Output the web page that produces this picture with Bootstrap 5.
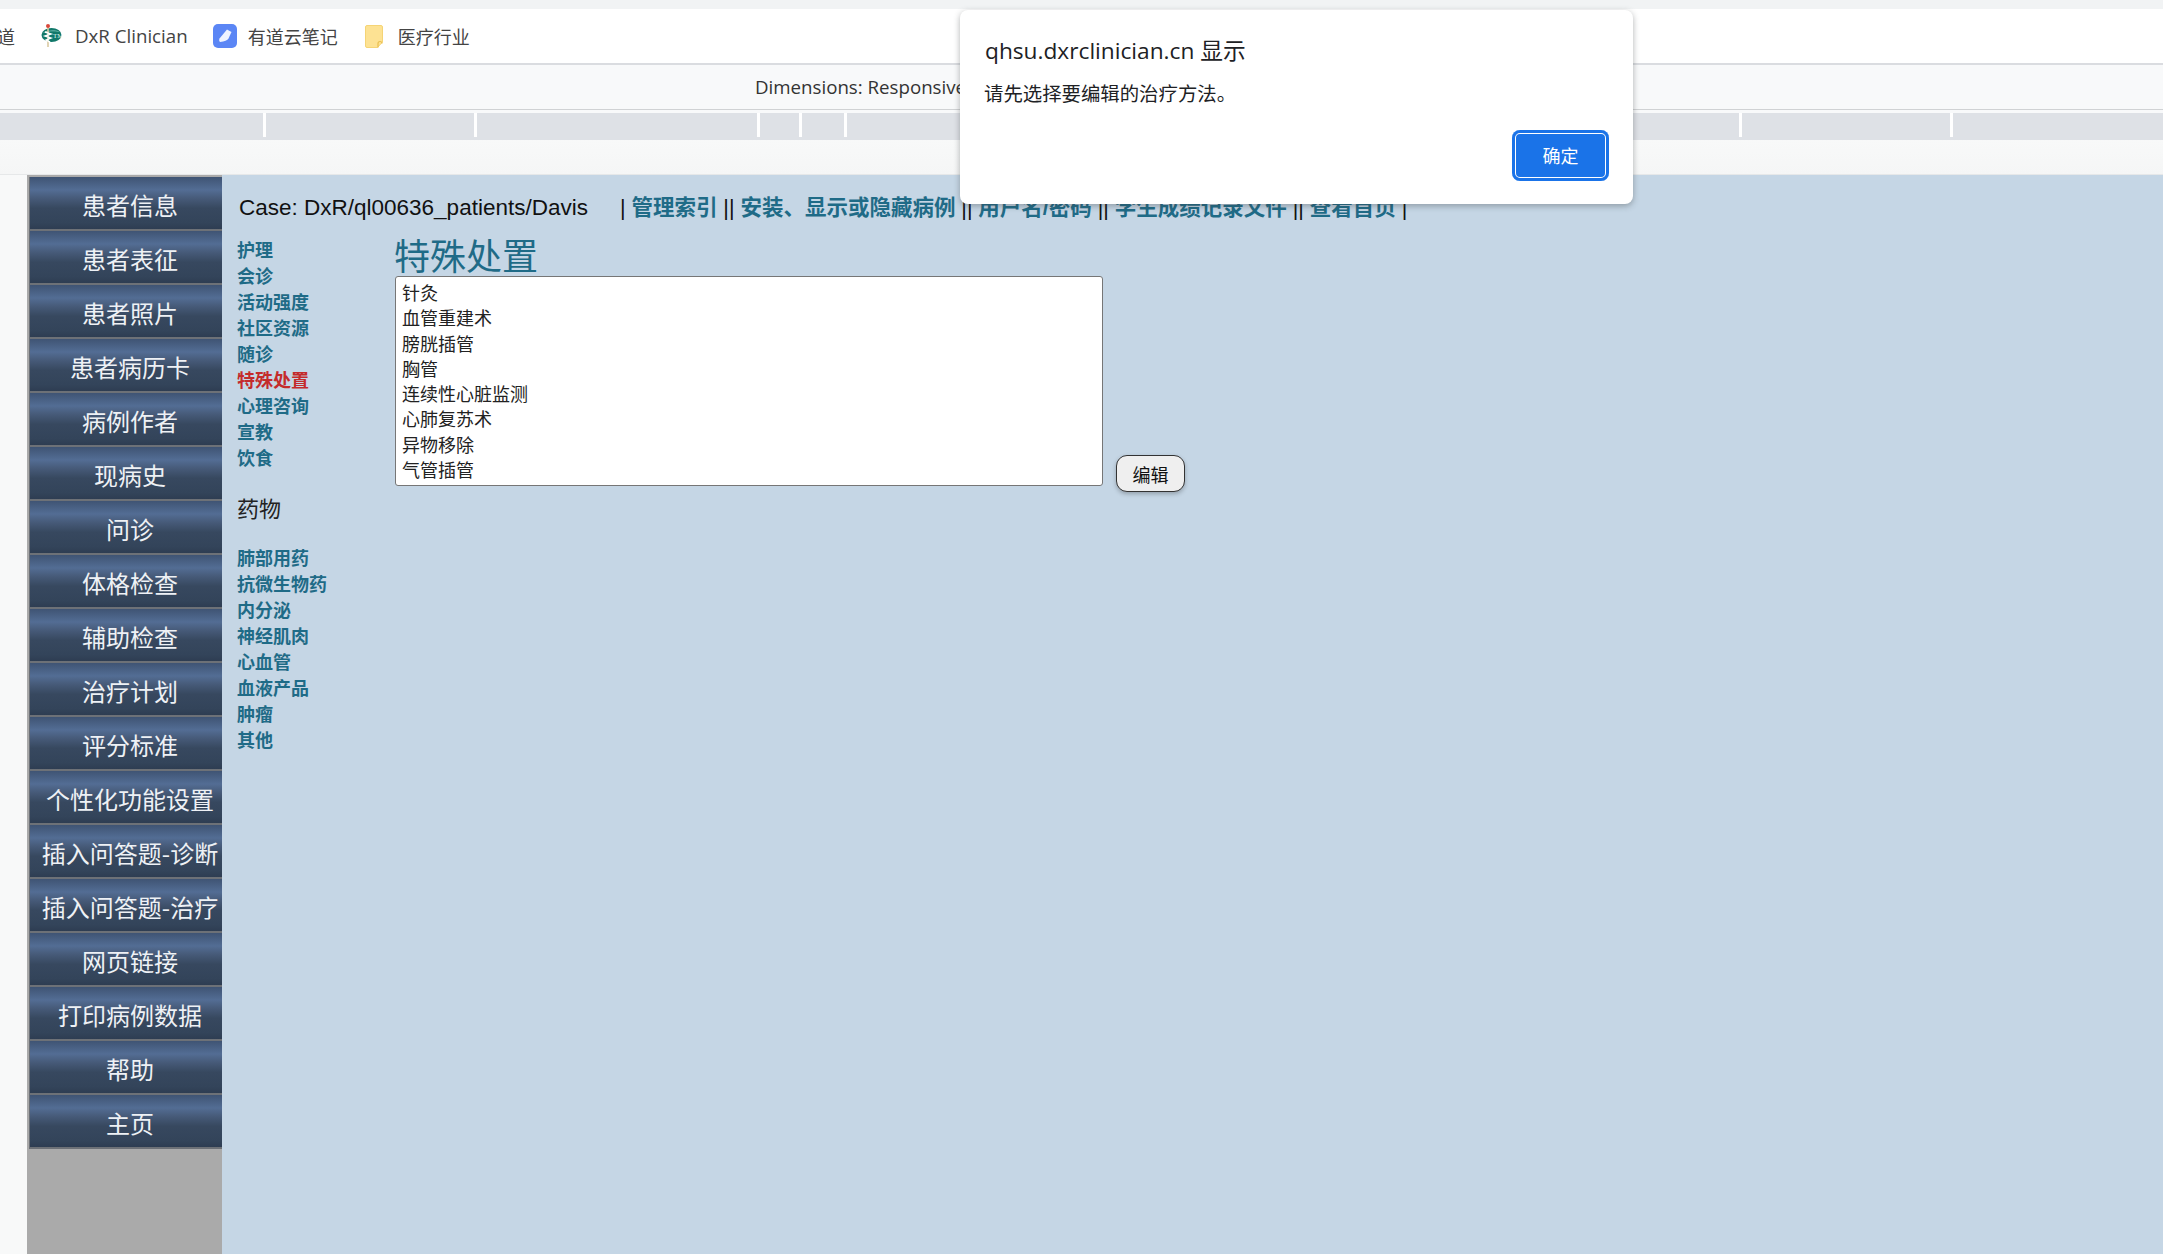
<!DOCTYPE html>
<html lang="zh">
<head>
<meta charset="utf-8">
<title>DxR Clinician</title>
<link href="https://cdn.jsdelivr.net/npm/bootstrap@5.3.0/dist/css/bootstrap.min.css" rel="stylesheet">
<style>
html,body{height:100%}
body{margin:0;overflow:hidden;background:#f8f9f9;font-family:"Noto Sans CJK SC","Noto Sans",sans-serif;color:#222;position:relative;width:2163px;height:1254px}
.tabstrip{height:9px;background:#f1f3f4}
.bookbar{height:56px;background:#fff;border-bottom:2px solid #dadce0;font-size:18px;color:#444;line-height:24px}
.bm-first{width:15px;overflow:hidden;white-space:nowrap;direction:rtl}
.bm-dxr{margin-left:26px;font-family:"Open Sans","Noto Sans CJK SC",sans-serif;font-size:18.7px;gap:13px}
.bm-you{margin-left:25px;gap:11px}
.bm-fold{margin-left:27px;gap:15px}
.devbar{height:45px;background:#f8f9fa;border-bottom:1px solid #d0d2d4;padding-left:755px;font-size:18.7px;color:#333;font-family:"Open Sans","Noto Sans CJK SC",sans-serif;white-space:nowrap}
.rulerwrap{height:30px;padding-top:3px;background:#f8f9fa}
.rulerbar{height:27px;background:#dee1e6;padding-bottom:3px}
.rulercell{height:24px;border-right:3px solid #fff;flex:none}
.ruler-a{width:266px}.ruler-b{width:211px}.ruler-c{width:283px}.ruler-d{width:42px}.ruler-e{width:45px}.ruler-f{width:895px}.ruler-g{width:211px}
.chromegap{height:35px;background:linear-gradient(#f8f9f9,#f5f6f6);border-bottom:1px solid #e6e8e9}
.pagewrap{height:1079px;background:#f8f9f9;padding-left:27px}
.sidepanel{width:195px;background:#aaa;padding:2px 0 0 2px;flex:none}
.sidelink{height:54px;display:flex;align-items:center;justify-content:center;padding:1px 0 0 8px;font-size:24px;line-height:30px;color:#eef1f5;white-space:nowrap;text-decoration:none;
 background:linear-gradient(#3f5474 0,#536d94 24%,#465a78 40%,#37485f 58%,#33445a 85%,#2e3d52 96%,#6d7177 96%,#6d7177 100%);border-left:1px solid #6d7177}
.sidelink:hover{color:#fff}
.mainpanel{background:#c5d6e5;padding:0 0 0 17px}
.topline{height:61px;padding-top:14px;font-size:21.5px;line-height:38px;white-space:nowrap;color:#111;font-family:"Liberation Sans","Noto Sans CJK SC",sans-serif}
.casetxt{font-size:22.5px;margin-right:32px}
.tlink{font-weight:700;color:#1f6b87;text-decoration:none}
.sep{margin:0 5.9px}
.leftcol{width:158px;flex:none;margin-left:-2px}
.slink{display:block;font-size:18px;line-height:26px;font-weight:700;color:#1f6b87;text-decoration:none}
.slink.cur{color:#c42b2b}
.drughead{font-size:22px;line-height:30px;margin:22px 0;color:#222}
.proctitle{font-size:36px;line-height:40px;color:#1f6b87;margin:-2px 0 0 -1px;font-weight:400;height:42px}
.procsel{width:708px;height:210px;border:1px solid #767676;border-radius:3px;background:#fff;font-size:18px;color:#222;padding:2px 0 0;overflow:hidden;font-family:"Noto Sans CJK SC",sans-serif}
.procsel option{padding:0 6px;height:25.3px;min-height:25.3px;line-height:25.3px}
.editbtn{width:69px;height:37px;margin:0 0 -6px 13px;border:1px solid #333;border-radius:11px;background:#efefef;font-size:18px;line-height:24px;padding:0;color:#111;box-shadow:0 2px 4px rgba(0,0,0,.25)}
.alertbox{position:absolute;left:960px;top:10px;width:673px;height:194px;border:0;border-radius:8px;background:#fff;box-shadow:0 2px 6px rgba(60,64,67,.4);padding:0 24px}
.alerttitle{font-size:22.7px;line-height:30px;margin:26px 0 0 1px;color:#202124;font-family:"Open Sans","Noto Sans CJK SC",sans-serif}
.alertmsg{font-size:19.4px;line-height:26px;margin-top:14px;color:#202124}
.okbtn{position:absolute;left:552px;top:120px;width:97px;height:51px;background:#1a73e8;border:0;border-radius:8px;font-size:18px;color:#fff;padding:0;box-shadow:inset 0 0 0 3px #1a73e8,inset 0 0 0 4px #fff}
</style>
</head>
<body>
<div class="tabstrip"></div>
<div class="bookbar d-flex align-items-center">
  <span class="bm-first">道</span>
  <span class="bm-dxr d-flex align-items-center">
    <svg width="21" height="24" viewBox="0 0 21 24"><ellipse cx="10.5" cy="11" rx="10" ry="7" fill="#11786a"/><path d="M2 9c3-3 13-3 17-1-4-1-12-1-17 1z" fill="#8fd0c4"/><text x="12" y="14" font-size="7" fill="#d8f0ea" font-family="Liberation Serif, serif">TM</text><path d="M7 2v21" stroke="#d9c9a0" stroke-width="1.6"/><path d="M4 8l6 2-6 2 6 2-5 2 4 2" stroke="#fff" stroke-width="1.4" fill="none"/><circle cx="7" cy="2" r="2" fill="#d9483b"/></svg>
    DxR Clinician</span>
  <span class="bm-you d-flex align-items-center">
    <svg width="24" height="24" viewBox="0 0 24 24"><rect width="24" height="24" rx="5" fill="#5b86f5"/><path d="M14 5.5l4.500 2.500-3 6.500c-1 2-4 3-8.500 3.500-1-1-1-2-.5-3.500z" fill="#eef3ff"/></svg>
    有道云笔记</span>
  <span class="bm-fold d-flex align-items-center">
    <svg width="18" height="23" viewBox="0 0 18 23"><path d="M2 .5h14a1.500 1.500 0 0 1 1.500 1.500v15l-5 5.500H2A1.500 1.500 0 0 1 .5 21V2A1.500 1.500 0 0 1 2 .5z" fill="#fde293" stroke="#f5d476"/><path d="M13 22.500v-4a2 2 0 0 1 4 0" fill="none" stroke="#e9bf4f" stroke-width="1.200"/></svg>
    医疗行业</span>
</div>
<div class="devbar d-flex align-items-center"><span>Dimensions: Responsive</span></div>
<div class="rulerwrap"><div class="rulerbar d-flex">
  <div class="rulercell ruler-a"></div><div class="rulercell ruler-b"></div><div class="rulercell ruler-c"></div><div class="rulercell ruler-d"></div><div class="rulercell ruler-e"></div><div class="rulercell ruler-f"></div><div class="rulercell ruler-g"></div>
</div></div>
<div class="chromegap"></div>
<div class="pagewrap d-flex">
  <div class="sidepanel">
    <nav class="nav flex-column">
      <a class="sidelink" href="#">患者信息</a>
      <a class="sidelink" href="#">患者表征</a>
      <a class="sidelink" href="#">患者照片</a>
      <a class="sidelink" href="#">患者病历卡</a>
      <a class="sidelink" href="#">病例作者</a>
      <a class="sidelink" href="#">现病史</a>
      <a class="sidelink" href="#">问诊</a>
      <a class="sidelink" href="#">体格检查</a>
      <a class="sidelink" href="#">辅助检查</a>
      <a class="sidelink" href="#">治疗计划</a>
      <a class="sidelink" href="#">评分标准</a>
      <a class="sidelink" href="#">个性化功能设置</a>
      <a class="sidelink" href="#">插入问答题-诊断</a>
      <a class="sidelink" href="#">插入问答题-治疗</a>
      <a class="sidelink" href="#">网页链接</a>
      <a class="sidelink" href="#">打印病例数据</a>
      <a class="sidelink" href="#">帮助</a>
      <a class="sidelink" href="#">主页</a>
    </nav>
  </div>
  <div class="mainpanel flex-grow-1">
    <div class="topline"><span class="casetxt">Case: DxR/ql00636_patients/Davis</span>|<a class="tlink sep" href="#">管理索引</a>||<a class="tlink sep" href="#">安装、显示或隐藏病例</a>||<a class="tlink sep" href="#">用户名/密码</a>||<a class="tlink sep" href="#">学生成绩记录文件</a>||<a class="tlink sep" href="#">查看首页</a>|</div>
    <div class="d-flex">
      <div class="leftcol">
        <a class="slink" href="#">护理</a>
        <a class="slink" href="#">会诊</a>
        <a class="slink" href="#">活动强度</a>
        <a class="slink" href="#">社区资源</a>
        <a class="slink" href="#">随诊</a>
        <a class="slink cur" href="#">特殊处置</a>
        <a class="slink" href="#">心理咨询</a>
        <a class="slink" href="#">宣教</a>
        <a class="slink" href="#">饮食</a>
        <div class="drughead">药物</div>
        <a class="slink" href="#">肺部用药</a>
        <a class="slink" href="#">抗微生物药</a>
        <a class="slink" href="#">内分泌</a>
        <a class="slink" href="#">神经肌肉</a>
        <a class="slink" href="#">心血管</a>
        <a class="slink" href="#">血液产品</a>
        <a class="slink" href="#">肿瘤</a>
        <a class="slink" href="#">其他</a>
      </div>
      <div>
        <h1 class="proctitle">特殊处置</h1>
        <div class="d-flex align-items-end">
          <select class="procsel" size="8">
            <option>针灸</option><option>血管重建术</option><option>膀胱插管</option><option>胸管</option><option>连续性心脏监测</option><option>心肺复苏术</option><option>异物移除</option><option>气管插管</option>
          </select>
          <button class="editbtn" type="button">编辑</button>
        </div>
      </div>
    </div>
  </div>
</div>
<div class="alertbox card">
  <div class="alerttitle">qhsu.dxrclinician.cn 显示</div>
  <div class="alertmsg">请先选择要编辑的治疗方法。</div>
  <button class="btn okbtn" type="button">确定</button>
</div>
</body>
</html>
